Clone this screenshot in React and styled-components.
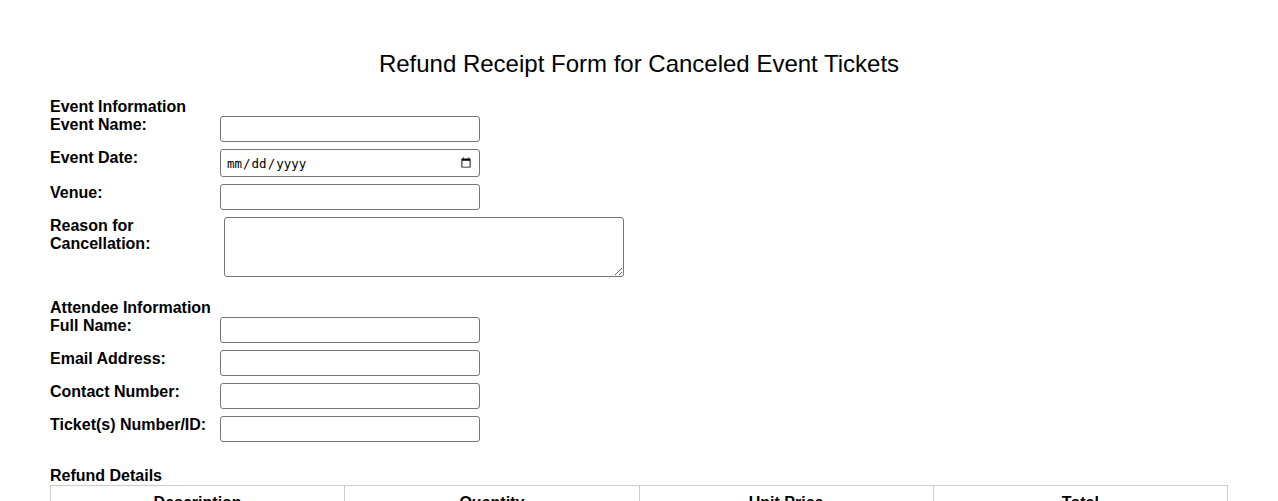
import React from 'react';
import styled, { createGlobalStyle } from 'styled-components';

const GlobalStyle = createGlobalStyle`
  body {
    margin: 0;
    background: #ffffff;
    font-family: "Liberation Sans", Arial, sans-serif;
    color: #000;
  }
`;

const Page = styled.div`
  padding: 50px 50px 40px;
`;

const Title = styled.h1`
  margin: 0 0 20px;
  font-size: 24px;
  font-weight: normal;
  line-height: 28px;
  text-align: center;
`;

const Section = styled.div`
  margin-bottom: ${props => props.gap || 14}px;
`;

const SectionHeading = styled.div`
  font-size: 16px;
  font-weight: bold;
  line-height: 18px;
`;

const Row = styled.div`
  display: flex;
  align-items: flex-start;
  margin-bottom: 7px;
`;

const Label = styled.label`
  flex: 0 0 170px;
  font-size: 16px;
  font-weight: bold;
  line-height: 18px;
`;

const TextInput = styled.input`
  box-sizing: border-box;
  width: 260px;
  height: ${props => (props.type === 'date' ? 28 : 26)}px;
  margin: 0;
  padding: 4px 5px;
  border: 1px solid #767676;
  border-radius: 3px;
  font-family: "DejaVu Sans Mono", monospace;
  font-size: 12.5px;
  color: #000;
  background: #fff;
`;

const TextArea = styled.textarea`
  box-sizing: border-box;
  width: 400px;
  height: 60px;
  margin: 0 0 0 4px;
  padding: 4px;
  border: 1px solid #767676;
  border-radius: 3px;
  font-family: "Liberation Sans", Arial, sans-serif;
  font-size: 13px;
`;

const Table = styled.table`
  width: 100%;
  table-layout: fixed;
  border-collapse: collapse;
`;

const Th = styled.th`
  border: 1px solid #cccccc;
  padding: 8px;
  font-size: 16px;
  font-weight: bold;
  text-align: center;
`;

const Td = styled.td`
  border: 1px solid #cccccc;
  padding: 8px;
  font-size: 16px;
  text-align: center;
`;

const eventFields = [
  { label: 'Event Name:', type: 'text' },
  { label: 'Event Date:', type: 'date' },
  { label: 'Venue:', type: 'text' },
];

const attendeeFields = [
  'Full Name:',
  'Email Address:',
  'Contact Number:',
  'Ticket(s) Number/ID:',
];

export default function App() {
  return (
    <Page>
      <GlobalStyle />
      <Title>Refund Receipt Form for Canceled Event Tickets</Title>

      <Section gap={22}>
        <SectionHeading>Event Information</SectionHeading>
        {eventFields.map(f => (
          <Row key={f.label}>
            <Label>{f.label}</Label>
            <TextInput type={f.type} />
          </Row>
        ))}
        <Row>
          <Label>Reason for Cancellation:</Label>
          <TextArea />
        </Row>
      </Section>

      <Section gap={25}>
        <SectionHeading>Attendee Information</SectionHeading>
        {attendeeFields.map(label => (
          <Row key={label}>
            <Label>{label}</Label>
            <TextInput type="text" />
          </Row>
        ))}
      </Section>

      <Section>
        <SectionHeading>Refund Details</SectionHeading>
        <Table>
          <thead>
            <tr>
              <Th>Description</Th>
              <Th>Quantity</Th>
              <Th>Unit Price</Th>
              <Th>Total</Th>
            </tr>
          </thead>
          <tbody>
            <tr>
              <Td>Ticket</Td>
              <Td>1</Td>
              <Td>$0.00</Td>
              <Td>$0.00</Td>
            </tr>
          </tbody>
        </Table>
      </Section>
    </Page>
  );
}
